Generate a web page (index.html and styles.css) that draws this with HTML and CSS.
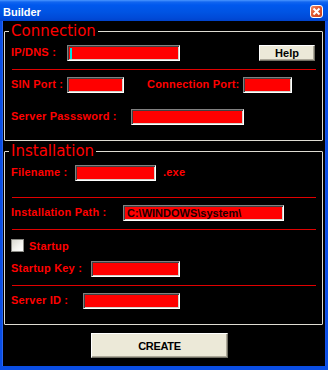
FILE: index.html
```html
<!DOCTYPE html>
<html>
<head>
<meta charset="utf-8">
<link rel="stylesheet" href="styles.css">
</head>
<body>
<div class="window">
  <div class="titlebar">
    <span class="title">Builder</span>
    <span class="close">
      <svg width="11" height="11" viewBox="0 0 11 11"><path d="M2.5 2.5 L8.5 8.5 M8.5 2.5 L2.5 8.5" stroke="#fff" stroke-width="2" fill="none"/></svg>
    </span>
  </div>
  <div class="client">
    <fieldset class="group conn">
      <legend>Connection</legend>
      <div class="body">
        <div class="row">
          <span class="lbl w-ip">IP/DNS :</span>
          <span class="field f-ip"><span class="caret"></span></span>
          <button class="btn help">Help</button>
        </div>
        <div class="sep"></div>
        <div class="row r-sin">
          <span class="lbl w-ip">SIN Port :</span>
          <span class="field f-sin"></span>
          <span class="lbl w-cport gap-cport">Connection Port:</span>
          <span class="field f-cport"></span>
        </div>
        <div class="row r-pass">
          <span class="lbl w-pass">Server Passsword :</span>
          <span class="field f-pass"></span>
        </div>
      </div>
    </fieldset>
    <fieldset class="group inst">
      <legend>Installation</legend>
      <div class="body">
        <div class="row">
          <span class="lbl w-file">Filename :</span>
          <span class="field f-file"></span>
          <span class="lbl ext">.exe</span>
        </div>
        <div class="sep sep-file"></div>
        <div class="row r-path">
          <span class="lbl w-path">Installation Path :</span>
          <span class="field f-path">C:\WINDOWS\system\</span>
        </div>
        <div class="sep sep-path"></div>
        <div class="row r-check">
          <span class="check"></span>
          <span class="lbl">Startup</span>
        </div>
        <div class="row r-key">
          <span class="lbl w-key">Startup Key :</span>
          <span class="field f-key"></span>
        </div>
        <div class="sep sep-key"></div>
        <div class="row r-id">
          <span class="lbl w-id">Server ID :</span>
          <span class="field f-id"></span>
        </div>
      </div>
    </fieldset>
    <button class="btn create">CREATE</button>
  </div>
</div>
</body>
</html>
```

FILE: styles.css
```css
html, body {
  margin: 0;
  padding: 0;
  background: #000;
}

.window {
  width: 328px;
  height: 370px;
  display: flex;
  flex-direction: column;
  box-sizing: border-box;
  background: #0a4ee4;
  font-family: "Liberation Sans", Arial, sans-serif;
}

.titlebar {
  height: 21px;
  flex: none;
  display: flex;
  justify-content: space-between;
  align-items: flex-start;
  padding: 0 5px 0 3px;
  background: linear-gradient(to bottom, #4a96ff 0, #1266f0 2px, #0058ee 5px, #0054e3 12px, #004ad8 18px, #0043cc 21px);
}

.title {
  margin-top: 5px;
  color: #fff;
  font-weight: bold;
  font-size: 11px;
  line-height: 14px;
}

.close {
  margin-top: 5px;
  width: 11px;
  height: 11px;
  border: 1px solid #fff;
  border-radius: 3px;
  background: linear-gradient(135deg, #f08a66 0, #e0572f 45%, #c8401c 100%);
  display: flex;
}

.client {
  flex: 1;
  margin: 0 3px 4px 3px;
  background: #000;
  display: flex;
  flex-direction: column;
  align-items: flex-start;
  box-shadow: -1px 0 0 #2a66f0, 1px 0 0 #1a54e6;
}

.group {
  align-self: stretch;
  margin: 2px 2px 0 1px;
  padding: 0;
  min-inline-size: 0;
  border: 1px solid #dedcd2;
  border-radius: 1px;
}

.group legend {
  margin-left: 4px;
  padding: 0 2px;
  color: #ff0000;
  font-family: "DejaVu Sans", sans-serif;
  font-size: 15px;
  line-height: 16px;
}

.body {
  padding: 6px 6px 15px 6px;
  display: flex;
  flex-direction: column;
}

.row {
  display: flex;
  align-items: flex-start;
  height: 16px;
}

.lbl {
  flex: none;
  color: #ff0000;
  font-weight: bold;
  font-size: 11px;
  line-height: 14px;
  letter-spacing: 0.2px;
  white-space: nowrap;
}

.w-ip { width: 56px; }
.w-cport { width: 96px; }
.w-pass { width: 120px; }
.w-file { width: 64px; }
.w-path { width: 112px; }
.w-key { width: 80px; }
.w-id { width: 72px; }

.gap-cport { margin-left: 23px; }
.ext { margin-left: 7px; }

.field {
  flex: none;
  box-sizing: border-box;
  height: 16px;
  background: #ff0000;
  border-top: 1px solid #808080;
  border-left: 1px solid #808080;
  border-bottom: 1px solid #ffffff;
  border-right: 1px solid #ffffff;
  box-shadow: inset 1px 1px 0 #404040, inset -1px -1px 0 #d4d0c8;
  display: flex;
  align-items: center;
}

.f-ip { width: 113px; }
.f-sin { width: 57px; }
.f-cport { width: 49px; }
.f-pass { width: 113px; }
.f-file { width: 81px; }
.f-path {
  width: 161px;
  padding-left: 3px;
  color: #1a0000;
  font-weight: bold;
  font-size: 11px;
  line-height: 14px;
  white-space: nowrap;
  overflow: hidden;
}
.f-key { width: 89px; }
.f-id { width: 97px; }

.caret {
  width: 2px;
  height: 11px;
  margin-left: 2px;
  background: #00e0e0;
}

.sep {
  height: 1px;
  margin: 8px 0 0 1px;
  background: #e00000;
}
.sep-file { margin-top: 16px; }

.r-sin { margin-top: 7px; }
.r-pass { margin-top: 16px; }
.r-path { margin-top: 7px; }
.r-check {
  margin-top: 9px;
  height: 13px;
  align-items: center;
}
.r-key { margin-top: 9px; }
.r-id { margin-top: 7px; }

.check {
  flex: none;
  box-sizing: border-box;
  width: 13px;
  height: 13px;
  margin-right: 5px;
  border: 1px solid #8c8c86;
  background: linear-gradient(135deg, #d8d8d0 0, #f4f4ef 60%, #ffffff 100%);
}

.btn {
  box-sizing: border-box;
  padding: 0;
  margin: 0;
  background: #ece9d8;
  border-top: 1px solid #ffffff;
  border-left: 1px solid #ffffff;
  border-bottom: 1px solid #716f64;
  border-right: 1px solid #716f64;
  box-shadow: inset -1px -1px 0 #aca899;
  color: #000;
  font-family: "Liberation Sans", Arial, sans-serif;
  font-weight: bold;
  font-size: 11px;
  line-height: 14px;
}

.help {
  flex: none;
  width: 56px;
  height: 16px;
  margin-left: 79px;
}

.create {
  width: 137px;
  height: 25px;
  margin: 8px 0 0 88px;
  letter-spacing: -0.3px;
}
```
